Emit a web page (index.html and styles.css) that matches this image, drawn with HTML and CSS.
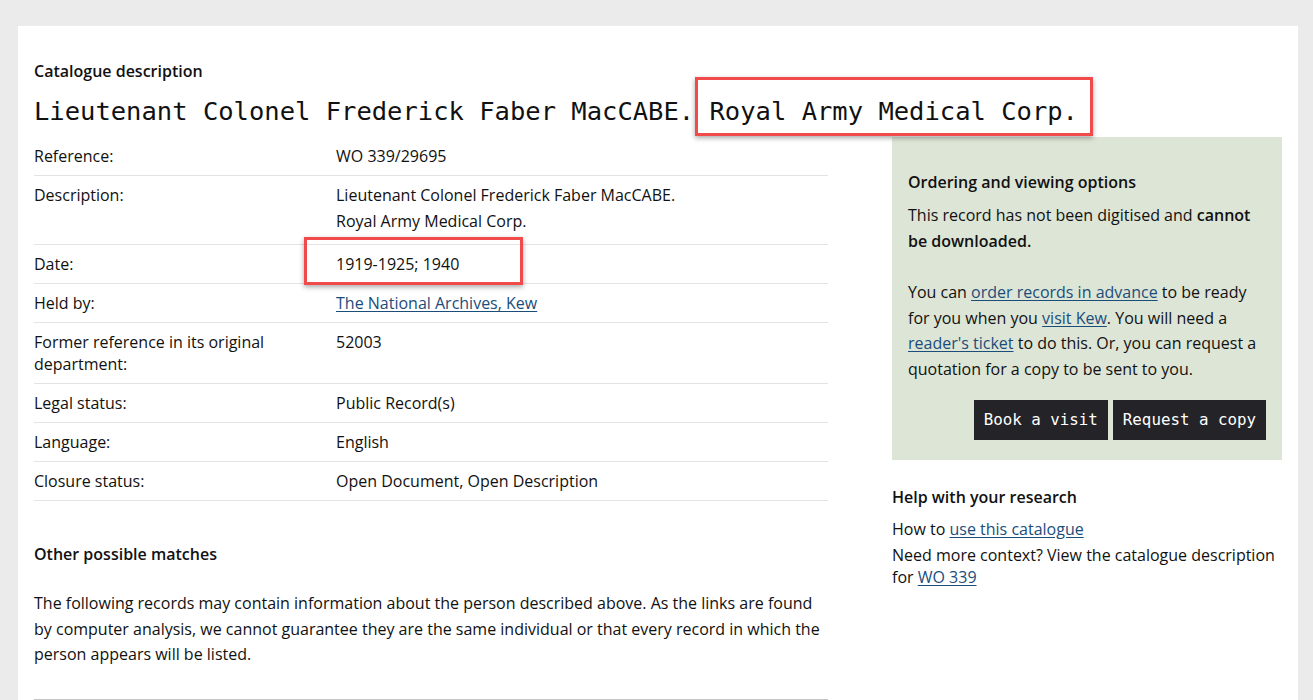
FILE: index.html
```html
<!DOCTYPE html>
<html lang="en">
<head>
<meta charset="utf-8">
<title>Catalogue description</title>
<link rel="stylesheet" href="styles.css">
</head>
<body>
<div class="card">
  <header class="record-header">
    <p class="eyebrow">Catalogue description</p>
    <h1 class="record-title">Lieutenant Colonel Frederick Faber MacCABE. <span class="marked marked--title">Royal Army Medical Corp.</span></h1>
  </header>
  <div class="layout">
    <main class="main">
      <table class="details">
        <tbody>
          <tr><th>Reference:</th><td>WO 339/29695</td></tr>
          <tr><th>Description:</th><td class="multi"><span class="line">Lieutenant Colonel Frederick Faber MacCABE.</span><span class="line">Royal Army Medical Corp.</span></td></tr>
          <tr><th>Date:</th><td><span class="marked marked--date">1919-1925; 1940</span></td></tr>
          <tr><th>Held by:</th><td><a href="#">The National Archives, Kew</a></td></tr>
          <tr><th>Former reference in its original department:</th><td>52003</td></tr>
          <tr><th>Legal status:</th><td>Public Record(s)</td></tr>
          <tr><th>Language:</th><td>English</td></tr>
          <tr><th>Closure status:</th><td>Open Document, Open Description</td></tr>
        </tbody>
      </table>
      <h2 class="section-title">Other possible matches</h2>
      <p class="body-text">The following records may contain information about the person described above. As the links are found by computer analysis, we cannot guarantee they are the same individual or that every record in which the person appears will be listed.</p>
      <hr class="rule">
    </main>
    <aside class="aside">
      <div class="options">
        <h2 class="options-title">Ordering and viewing options</h2>
        <p class="options-text">This record has not been digitised and <strong>cannot be downloaded.</strong></p>
        <p class="options-text">You can <a href="#">order records in advance</a> to be ready for you when you <a href="#">visit Kew</a>. You will need a <a href="#">reader's ticket</a> to do this. Or, you can request a quotation for a copy to be sent to you.</p>
        <div class="actions">
          <a class="btn" href="#">Book a visit</a>
          <a class="btn" href="#">Request a copy</a>
        </div>
      </div>
      <div class="help">
        <h2 class="help-title">Help with your research</h2>
        <p class="help-text">How to <a href="#">use this catalogue</a></p>
        <p class="help-text">Need more context? View the catalogue description for <a href="#">WO 339</a></p>
      </div>
    </aside>
  </div>
</div>
</body>
</html>
```
FILE: styles.css
```css
* { box-sizing: border-box; }

html, body {
  margin: 0;
  padding: 0;
}

body {
  background: #ebebeb;
  padding: 26px 15px 0 18px;
  font-family: "Open Sans", "Noto Sans", sans-serif;
  font-size: 16px;
  line-height: 22px;
  color: #111;
  height: 700px;
  overflow: hidden;
}

a { color: #1b4d7b; text-decoration: underline; text-underline-offset: 2px; }

.card {
  background: #fff;
  min-height: 700px;
  padding: 34px 16px 0;
}

.eyebrow {
  margin: 0;
  font-weight: 600;
  line-height: 22px;
}

.record-title {
  margin: 13px 0 10px;
  font-family: "DejaVu Sans Mono", "Liberation Mono", monospace;
  font-weight: 400;
  font-size: 25.5px;
  line-height: 32px;
  color: #111;
  position: relative;
}

.marked { position: relative; }
.marked::after {
  content: "";
  position: absolute;
  border: 3px solid #f04a4a;
  box-shadow: 0 2px 5px rgba(0,0,0,.35);
  pointer-events: none;
}
.marked--title::after {
  left: -15px;
  right: -15px;
  top: -19px;
  bottom: -10px;
}
.marked--date::after {
  left: -32px;
  right: -64px;
  top: -16px;
  bottom: -10px;
}

.layout {
  display: grid;
  grid-template-columns: 1fr 390px;
  column-gap: 64px;
}

.details {
  width: 100%;
  border-collapse: collapse;
}
.details th,
.details td {
  text-align: left;
  vertical-align: top;
  font-weight: 400;
  padding: 8px 0;
  line-height: 22px;
  border-bottom: 1px solid #e3e3e3;
}
.details th { width: 302px; padding-right: 24px; }
.details td.multi {
  line-height: 26px;
  padding: 6px 0 10px;
}
.details .line { display: block; }

.section-title {
  margin: 42px 0 26px;
  font-size: 16px;
  font-weight: 600;
  line-height: 22px;
}

.body-text {
  margin: 0;
  line-height: 1.6;
}

.rule {
  margin: 31px 0 0;
  border: 0;
  border-top: 1px solid #c4c4c4;
}

.options {
  background: #dde5d6;
  padding: 16px 16px 20px;
}
.options-title {
  margin: 18px 0 10px;
  font-size: 16px;
  font-weight: 600;
  line-height: 22px;
}
.options-text {
  margin: 0 0 26px;
  line-height: 1.6;
}
.options-text strong { font-weight: 600; }
.options-text:last-of-type { margin-bottom: 0; }

.actions {
  display: flex;
  justify-content: flex-end;
  gap: 5px;
  margin-top: 17px;
}
.btn {
  display: block;
  background: #242428;
  color: #fff;
  text-decoration: none;
  font-family: "DejaVu Sans Mono", "Liberation Mono", monospace;
  font-size: 15.8px;
  line-height: 20px;
  padding: 10px 10px;
}

.help { margin-top: 26px; }
.help-title {
  margin: 0 0 10px;
  font-size: 16px;
  font-weight: 600;
  line-height: 22px;
}
.help-text {
  margin: 0 0 4px;
  line-height: 22px;
}
```
